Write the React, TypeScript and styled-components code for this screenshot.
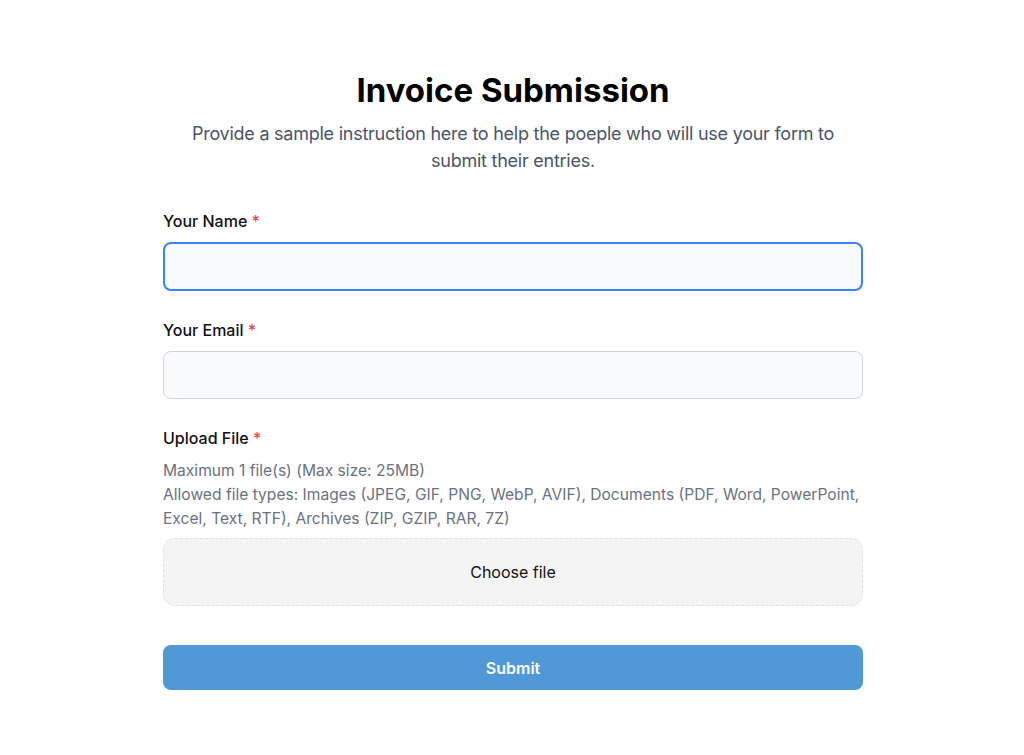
import React from "react";
import styled, { createGlobalStyle } from "styled-components";

const GlobalStyle = createGlobalStyle`
  html, body {
    margin: 0;
    padding: 0;
    background: #ffffff;
    font-family: Inter, "Noto Sans", sans-serif;
    color: #111827;
  }
  * {
    box-sizing: border-box;
  }
`;

interface FieldProps {
  label: string;
  required?: boolean;
  children: React.ReactNode;
}

function Field({ label, required, children }: FieldProps) {
  return (
    <FieldWrapper>
      <Label>
        {label}
        {required ? <Star> *</Star> : null}
      </Label>
      {children}
    </FieldWrapper>
  );
}

function App() {
  return (
    <>
      <GlobalStyle />
      <Page>
        <Form onSubmit={(e) => e.preventDefault()}>
          <Header>
            <Title>Invoice Submission</Title>
            <Intro>
              Provide a sample instruction here to help the poeple who will use
              your form to submit their entries.
            </Intro>
          </Header>
          <Field label="Your Name" required>
            <TextInput type="text" $focused />
          </Field>
          <Field label="Your Email" required>
            <TextInput type="email" />
          </Field>
          <Field label="Upload File" required>
            <HelpText>
              Maximum 1 file(s) (Max size: 25MB)
              <br />
              Allowed file types: Images (JPEG, GIF, PNG, WebP, AVIF), Documents
              (PDF, Word, PowerPoint, Excel, Text, RTF), Archives (ZIP, GZIP,
              RAR, 7Z)
            </HelpText>
            <DropZone type="button">Choose file</DropZone>
          </Field>
          <SubmitButton type="submit">Submit</SubmitButton>
        </Form>
      </Page>
    </>
  );
}

const Page = styled.div`
  display: flex;
  justify-content: center;
  padding: 70px 0 64px 2px;
`;

const Form = styled.form`
  width: 700px;
  display: flex;
  flex-direction: column;
`;

const Header = styled.div`
  display: flex;
  flex-direction: column;
  align-items: center;
  text-align: center;
  margin-bottom: 36px;
`;

const Title = styled.h1`
  margin: 0 0 10px;
  font-size: 33px;
  line-height: 40px;
  font-weight: 700;
  color: #000000;
`;

const Intro = styled.p`
  margin: 0;
  max-width: 680px;
  font-size: 18px;
  line-height: 27px;
  letter-spacing: -0.25px;
  color: #4b5563;
`;

const FieldWrapper = styled.div`
  display: flex;
  flex-direction: column;
  margin-bottom: 28px;
`;

const Label = styled.label`
  font-size: 16px;
  line-height: 22px;
  font-weight: 500;
  color: #111111;
  margin-bottom: 10px;
`;

const Star = styled.span`
  color: #ef4444;
`;

const TextInput = styled.input<{ $focused?: boolean }>`
  width: 100%;
  height: ${(p) => (p.$focused ? "49px" : "48px")};
  border-radius: 8px;
  background: #f9fafb;
  border: ${(p) => (p.$focused ? "2px solid #3b82f6" : "1px solid #d1d5db")};
  padding: 0 14px;
  font-family: inherit;
  font-size: 16px;
  outline: none;
`;

const HelpText = styled.p`
  margin: 0 0 7px;
  font-size: 15.6px;
  line-height: 24px;
  color: #6b7280;
`;

const DropZone = styled.button`
  width: 100%;
  height: 68px;
  border: 1px dashed #e0e0e0;
  border-radius: 12px;
  background: #f4f4f4;
  font-family: inherit;
  font-size: 16px;
  color: #111111;
  cursor: pointer;
`;

const SubmitButton = styled.button`
  margin-top: 11px;
  width: 100%;
  height: 45px;
  border: none;
  border-radius: 8px;
  background: #5098d6;
  color: #ffffff;
  font-family: inherit;
  font-size: 16px;
  font-weight: 600;
  cursor: pointer;
`;

export default App;
